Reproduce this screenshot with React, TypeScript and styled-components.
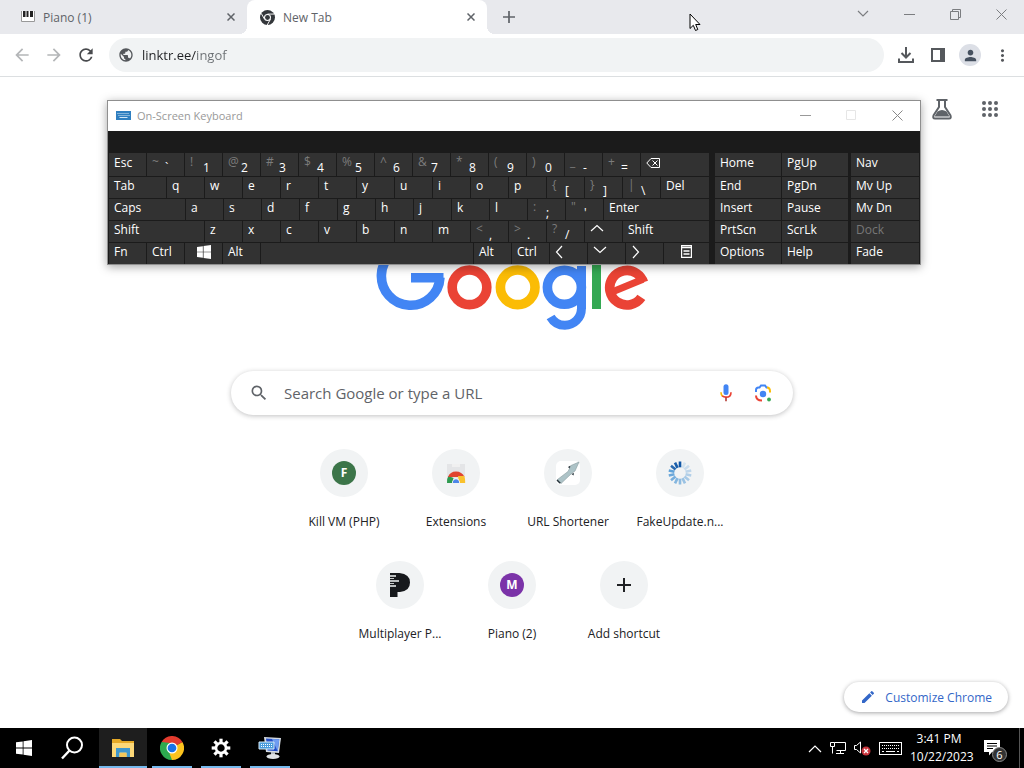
import React from "react";
import styled, { createGlobalStyle, css } from "styled-components";
import {
  MdArrowBack,
  MdArrowForward,
  MdEdit,
  MdMoreVert,
  MdPerson,
  MdPublic,
  MdRefresh,
  MdSearch,
} from "react-icons/md";

const GlobalStyle = createGlobalStyle`
  *, *::before, *::after { box-sizing: border-box; }
  body {
    margin: 0;
    background: #fff;
    font-family: "Open Sans", "Noto Sans", sans-serif;
    font-size: 12px;
    color: #202124;
  }
  button, input { font: inherit; color: inherit; }
  button { border: 0; padding: 0; background: none; }
  svg { display: block; flex: none; }
`;

const Desktop = styled.div`
  position: relative;
  min-height: 100vh;
  display: flex;
  flex-direction: column;
  overflow: hidden;
`;

/* ---------- browser frame ---------- */

const TabStrip = styled.header`
  display: flex;
  height: 34px;
  background: #e8e9ed;
  color: #5f6368;
`;

const Tab = styled.div<{ $active?: boolean }>`
  position: relative;
  display: flex;
  align-items: center;
  gap: 8px;
  flex: 0 1 ${(p) => (p.$active ? 240 : 247)}px;
  padding: 0 8px 0 ${(p) => (p.$active ? 13 : 21)}px;
  ${(p) =>
    p.$active &&
    css`
      background: #fff;
      border-radius: 8px 8px 0 0;
      &::before,
      &::after {
        content: "";
        position: absolute;
        bottom: 0;
        width: 8px;
        height: 8px;
      }
      &::before {
        right: 100%;
        background: radial-gradient(circle at 0 0, transparent 8px, #fff 8px);
      }
      &::after {
        left: 100%;
        background: radial-gradient(circle at 100% 0, transparent 8px, #fff 8px);
      }
    `}
`;

const TabTitle = styled.span`
  flex: 1;
  white-space: nowrap;
`;

const IconButton = styled.button<{ $size: number }>`
  display: flex;
  align-items: center;
  justify-content: center;
  width: ${(p) => p.$size}px;
  height: ${(p) => p.$size}px;
`;

const NewTabButton = styled(IconButton)`
  margin: 3px 0 0 8px;
`;

const Spacer = styled.div`
  flex: 1;
`;

const Captions = styled.div`
  display: flex;
`;

const CaptionButton = styled.button<{ $tone?: string }>`
  display: flex;
  align-items: center;
  justify-content: center;
  width: 46px;
  height: 28px;
  color: ${(p) => p.$tone ?? "#7b7d80"};
`;

const Toolbar = styled.nav`
  display: flex;
  align-items: center;
  height: 43px;
  padding: 0 6px;
  background: #fff;
  border-bottom: 1px solid #dcdfe1;
  color: #55585c;
`;

const NavButton = styled(IconButton)<{ $muted?: boolean }>`
  color: ${(p) => (p.$muted ? "#b4b6b8" : "#484a4d")};
`;

const Omnibox = styled.label`
  flex: 1;
  display: flex;
  align-items: center;
  gap: 8px;
  height: 34px;
  margin: 0 6px 0 7px;
  padding: 0 9px;
  border-radius: 17px;
  background: #f1f3f4;
`;

const AddressInput = styled.input`
  flex: 1;
  min-width: 0;
  border: 0;
  padding: 0;
  outline: 0;
  font-size: 13px;
  line-height: 20px;
  color: #202124;
  background: linear-gradient(to right, #202124 54px, #6b6f73 54px);
  background-clip: text;
  -webkit-text-fill-color: transparent;
`;

const Avatar = styled.span`
  display: flex;
  align-items: center;
  justify-content: center;
  width: 22px;
  height: 22px;
  border-radius: 50%;
  background: #dcdfe6;
  color: #45505f;
`;

/* ---------- new tab page ---------- */

const Page = styled.main`
  position: relative;
  flex: 1;
  display: flex;
  flex-direction: column;
  align-items: center;
  padding-bottom: 48px;
`;

const PageTools = styled.div`
  align-self: flex-end;
  display: flex;
  gap: 16px;
  padding: 16px 18px 0 0;
  color: #5f6368;
`;

const Logo = styled.div`
  margin-top: 114px;
`;

const SearchBox = styled.label`
  display: flex;
  align-items: center;
  width: calc(100% - 64px);
  max-width: 562px;
  height: 44px;
  margin-top: 40px;
  padding: 0 20px 0 18px;
  border-radius: 22px;
  background: #fff;
  box-shadow: 0 1px 5px rgba(32, 33, 36, 0.28);
  color: #5f6368;
`;

const SearchInput = styled.input`
  flex: 1;
  min-width: 0;
  margin-left: 15px;
  border: 0;
  padding: 0;
  outline: 0;
  background: none;
  font-size: 15px;
  line-height: 24px;
  &::placeholder {
    color: #5f6368;
    opacity: 1;
  }
`;

const SearchActions = styled.div`
  display: flex;
  gap: 17px;
`;

const Shortcuts = styled.div`
  display: flex;
  flex-wrap: wrap;
  justify-content: center;
  width: 100%;
  max-width: 448px;
  margin-top: 34px;
`;

const ShortcutLink = styled.a`
  display: flex;
  flex-direction: column;
  align-items: center;
  gap: 15px;
  width: 112px;
  height: 112px;
  color: #202124;
  text-decoration: none;
  line-height: 20px;
  white-space: nowrap;
`;

const ShortcutDisc = styled.span`
  display: flex;
  align-items: center;
  justify-content: center;
  width: 48px;
  height: 48px;
  border-radius: 50%;
  background: #f1f3f4;
`;

const Monogram = styled.span<{ $color: string }>`
  width: 24px;
  height: 24px;
  border-radius: 50%;
  background: ${(p) => p.$color};
  color: #fff;
  font-weight: 700;
  line-height: 24px;
  text-align: center;
`;

const CustomizeButton = styled.button`
  position: absolute;
  right: 16px;
  bottom: 16px;
  display: flex;
  align-items: center;
  gap: 9px;
  height: 30px;
  padding: 0 16px;
  border-radius: 15px;
  background: #fff;
  box-shadow: 0 1px 4px rgba(32, 33, 36, 0.4);
  color: #3367c8;
`;

/* ---------- on-screen keyboard ---------- */

const KeyboardWindow = styled.section`
  position: absolute;
  top: 100px;
  left: 107px;
  width: 814px;
  border: 1px solid #8f8f8f;
  background: #1b1b1b;
  box-shadow: 0 2px 9px rgba(0, 0, 0, 0.35);
`;

const KeyboardTitle = styled.header`
  display: flex;
  align-items: center;
  height: 30px;
  padding: 0 0 2px 8px;
  background: #fff;
  color: #999;
`;

const KeyboardName = styled.h1`
  flex: 1;
  margin: 0 0 0 6px;
  font-size: 11px;
  font-weight: 400;
`;

const KeyboardBody = styled.div`
  display: flex;
  padding: 22px 1px 0;
`;

const KeyRows = styled.div`
  flex: 1;
  display: flex;
  flex-direction: column;
  gap: 1px;
`;

const KeyRow = styled.div`
  display: flex;
  gap: 1px;
`;

const SideColumn = styled.div<{ $width: number; $gap: number }>`
  display: flex;
  flex-direction: column;
  gap: 1px;
  width: ${(p) => p.$width}px;
  margin-left: ${(p) => p.$gap}px;
`;

const KeyCap = styled.button<{ $width?: number; $centered?: boolean; $dim?: boolean; $tall?: boolean }>`
  display: flex;
  align-items: flex-start;
  justify-content: ${(p) => (p.$centered ? "center" : "flex-start")};
  flex: ${(p) => (p.$width ? `0 0 ${p.$width}px` : "1 1 auto")};
  height: ${(p) => (p.$tall ? 23 : 21)}px;
  padding: ${(p) => (p.$tall ? 1 : 0)}px 5px 0;
  background: #323232;
  color: ${(p) => (p.$dim ? "#777" : "#fff")};
  line-height: 18px;
  text-align: left;
  white-space: nowrap;
  svg {
    margin-top: 2px;
  }
`;

const SideKey = styled(KeyCap)`
  flex: none;
`;

const ShiftGlyph = styled.span`
  width: 13px;
  color: #7c7c7c;
  line-height: 16px;
`;

const BaseGlyph = styled.span`
  line-height: 27px;
`;

/* ---------- taskbar ---------- */

const Taskbar = styled.footer`
  display: flex;
  height: 40px;
  background: #000;
  color: #fff;
`;

const TaskButton = styled.button<{ $running?: boolean; $current?: boolean }>`
  display: flex;
  align-items: center;
  justify-content: center;
  width: 48px;
  margin-right: 1px;
  background: ${(p) =>
    p.$current
      ? "linear-gradient(#76b9ed, #76b9ed) bottom / 48px 2px no-repeat, #1e1e1e"
      : p.$running
      ? "linear-gradient(#76b9ed, #76b9ed) bottom / 40px 2px no-repeat"
      : "none"};
`;

const SearchTaskButton = styled(TaskButton)`
  margin-right: 2px;
`;

const Tray = styled.div`
  display: flex;
  align-items: center;
  gap: 8px;
  padding-right: 19px;
`;

const TrayButton = styled.button`
  position: relative;
  display: flex;
`;

const NoticeButton = styled(TrayButton)`
  margin-left: 8px;
`;

const Clock = styled.time`
  width: 58px;
  line-height: 18px;
  text-align: center;
  white-space: nowrap;
  font-size: 12px;
`;

const NoticeCount = styled.span`
  position: absolute;
  left: 8px;
  top: 7px;
  width: 15px;
  height: 15px;
  border: 1px solid #888;
  border-radius: 50%;
  background: #333;
  font-size: 11px;
  line-height: 13px;
  text-align: center;
`;

const PeekEdge = styled.div`
  width: 5px;
  border-left: 1px solid #555;
`;

const PointerMark = styled.svg`
  position: absolute;
  left: 689px;
  top: 13px;
`;

/* ---------- drawings ---------- */

const CrossIcon = ({ size = 8, weight = 1.5 }: { size?: number; weight?: number }) => (
  <svg width={size} height={size} viewBox={`0 0 ${size} ${size}`} stroke="currentColor" strokeWidth={weight}>
    <path d={`M.5 .5L${size - 0.5} ${size - 0.5}M${size - 0.5} .5L.5 ${size - 0.5}`} />
  </svg>
);

const DashIcon = () => (
  <svg width="11" height="11" stroke="currentColor">
    <path d="M0 5.5h11" />
  </svg>
);

const PianoIcon = () => (
  <svg width="14" height="12" viewBox="0 0 14 12">
    <path d="M.5 0v10.500h13V0" fill="#fff" stroke="#999" />
    <path d="M2 0h2.500v6H2zM5.500 0h2v6h-2zM9 0h3v6H9z" fill="#222" />
  </svg>
);

const ChromeMono = () => (
  <svg width="15" height="15" viewBox="0 0 24 24">
    <circle cx="12" cy="12" r="12" fill="#34373b" />
    <path d="M12 6.500h11M7.300 14.800L2 5.500M16.700 14.800L11.500 24" stroke="#fff" strokeWidth="1.500" />
    <circle cx="12" cy="12" r="5.600" fill="#fff" />
    <circle cx="12" cy="12" r="3.900" fill="#34373b" />
  </svg>
);

const ChromeColor = () => (
  <svg width="24" height="24" viewBox="0 0 48 48">
    <path d="M24 24L3.200 12A24 24 0 0 1 44.800 12z" fill="#e33b2e" />
    <path d="M24 24L44.800 12A24 24 0 0 1 24 48z" fill="#fcc31e" />
    <path d="M24 24L24 48A24 24 0 0 1 3.200 12z" fill="#2da94f" />
    <path d="M24 13h21.300l-.5-1L24 12z" fill="#e33b2e" />
    <path d="M33.500 29.500L24 48l-5-13z" fill="#fcc31e" />
    <path d="M3.200 12L14.500 29.500 20 14z" fill="#2da94f" />
    <circle cx="24" cy="24" r="11" fill="#fff" />
    <circle cx="24" cy="24" r="8.700" fill="#1a73e8" />
  </svg>
);

const DownloadIcon = () => (
  <svg width="18" height="18" fill="none" stroke="currentColor" strokeWidth="2">
    <path d="M9 1v10M4.500 7L9 11.500 13.500 7M2 12.500V16h14v-3.500" />
  </svg>
);

const SidePanelIcon = () => (
  <svg width="14" height="14">
    <path d="M1 1h12v12H1z" fill="none" stroke="currentColor" strokeWidth="2" />
    <path d="M9 1h4v12H9z" fill="currentColor" />
  </svg>
);

const FlaskIcon = () => (
  <svg width="22" height="22" viewBox="0 0 22 22" fill="none" stroke="currentColor" strokeWidth="2">
    <path d="M5.500 2h11M8 2v7L2.500 17.500Q1.500 20.500 4 20.500H18q2.500 0 1.500-3L14 9V2" />
    <path d="M6.500 13.500q4.500-3 9 0l3 5H3.500z" fill="currentColor" stroke="none" />
  </svg>
);

const AppsIcon = () => (
  <svg width="16" height="16" fill="currentColor">
    {[2, 8, 14].map((y) => [2, 8, 14].map((x) => <circle key={`${x}-${y}`} cx={x} cy={y} r="2" />))}
  </svg>
);

/* Wordmark built from rings and bars; each ring opens through its dash pattern. */
const GoogleLogo = () => (
  <svg width="272" height="92" viewBox="376 239 272 92" fill="none" strokeWidth="9.600" role="img" aria-label="Google">
    <circle cx="410.700" cy="276" r="29.300" stroke="#4285f4" pathLength="360" strokeDasharray="312 48" transform="rotate(3 410.700 276)" />
    <rect x="411" y="273" width="32.500" height="9.500" fill="#4285f4" />
    <circle cx="469.500" cy="287.300" r="17.300" stroke="#ea4335" />
    <circle cx="517.700" cy="287.300" r="17.300" stroke="#fbbc05" />
    <circle cx="564.400" cy="287.300" r="17" stroke="#4285f4" />
    <rect x="577" y="266" width="9" height="43" fill="#4285f4" />
    <circle cx="564.900" cy="308.700" r="16.500" stroke="#4285f4" strokeWidth="9" pathLength="360" strokeDasharray="150 210" />
    <rect x="592" y="239" width="9" height="70" fill="#34a853" />
    <circle cx="627" cy="287.700" r="17.300" stroke="#ea4335" pathLength="360" strokeDasharray="308 52" transform="rotate(34 627 287.700)" />
    <line x1="612" y1="292" x2="643" y2="279.300" stroke="#ea4335" strokeWidth="7" />
  </svg>
);

const MicIcon = () => (
  <svg width="20" height="22" viewBox="0 0 24 24" fill="none" strokeWidth="2">
    <rect x="9" y="1.500" width="6" height="13" rx="3" fill="#4285f4" />
    <path d="M6 11q0 3 1.800 4.700" stroke="#fbbc04" />
    <path d="M7.500 15.500Q9 17 12 17q6 0 6-6" stroke="#ea4335" />
    <path d="M12 17v5" stroke="#b7423a" />
  </svg>
);

const LensIcon = () => (
  <svg width="20" height="20" viewBox="0 0 20 20" fill="none" strokeWidth="2">
    <path d="M3 9V7q0-2.500 2.500-2.500h1L8 2.500h4l1.500 2h1" stroke="#4285f4" />
    <path d="M14 4.500q3 0 3 4v1" stroke="#fbbc04" />
    <path d="M3 12.500q0 5 6 5" stroke="#ea4335" />
    <circle cx="10" cy="11" r="3.200" fill="#4285f4" />
    <circle cx="16" cy="16.500" r="1.900" fill="#34a853" />
  </svg>
);

const WebStoreIcon = () => (
  <svg width="24" height="24">
    <path d="M3 3h18v16H3z" fill="#e4e5e7" />
    <path d="M8 3h8v3H8z" fill="#f0f0f0" />
    <path d="M3 22a9.500 9.500 0 0 1 1.500-7l5 2-1 5z" fill="#2f9b50" />
    <path d="M4 16Q6 10.500 12 10.500T20.500 16h-10z" fill="#e0452f" />
    <path d="M14 15h6.200q1.300 3 1 7H15z" fill="#f9c12d" />
    <path d="M8 22a4 4.500 0 0 1 8 0z" fill="#fff" />
    <path d="M8.800 22a3.200 3.800 0 0 1 6.400 0z" fill="#4d86e8" />
  </svg>
);

const RocketIcon = () => (
  <svg width="24" height="24">
    <rect width="24" height="24" rx="5" fill="#fff" />
    <path d="M23 1l-8 3.500-3 6L1.500 18.500 5 22.500 15 13l4-3z" fill="#adc3c7" stroke="#899ca0" strokeWidth=".6" />
    <path d="M1.500 18.500L5 22l-1.500.5-3-3zM12 6l2.500-1.500-1 3zM15.500 13l2.500-1-.5 2.500z" fill="#26333a" />
  </svg>
);

const SpinnerIcon = () => (
  <svg width="24" height="24" viewBox="-12 -12 24 24">
    {Array.from({ length: 14 }, (_, i) => (
      <rect
        key={i}
        x="-1.300"
        y="-11.500"
        width="2.600"
        height="5.800"
        fill={i === 0 || i > 11 ? "#0d55a5" : "#3f8fd2"}
        opacity={i === 0 ? 1 : 0.1 + i * 0.065}
        transform={`rotate(${(i * 360) / 14})`}
      />
    ))}
  </svg>
);

const MultiplayerIcon = () => (
  <svg width="24" height="24">
    <path d="M2 0h9.500q10.500 1 10.500 9.500T12 19H9.500v5H2z" fill="#17191c" />
    <path d="M2 3h6M2 8h9M2 13h6" stroke="#f1f3f4" strokeWidth="1.600" />
    <path d="M2 5.500h4M2 10.500h4" stroke="#f1f3f4" strokeWidth=".8" />
  </svg>
);

const PlusIcon = ({ size }: { size: number }) => (
  <svg width={size} height={size} viewBox="0 0 14 14" stroke="currentColor" strokeWidth="2">
    <path d="M7 0v14M0 7h14" />
  </svg>
);

const KeyboardGlyph = () => (
  <svg width="15" height="9">
    <rect width="15" height="9" fill="#2f7fc0" />
    <path d="M1.500 2.500h12M2.500 4.500h11" stroke="#d4e8f7" strokeDasharray="1 1" />
    <path d="M3.500 6.500h8" stroke="#d4e8f7" />
  </svg>
);

const WindowsIcon = ({ size }: { size: number }) => (
  <svg width={size} height={size} viewBox="0 0 16 16" fill="#fff">
    <path d="M0 2.300l6.700-.9v6.200H0zM7.500 1.200L16 0v7.600H7.500zM0 8.400h6.700v6.200L0 13.700zM7.500 8.400H16V16l-8.500-1.200z" />
  </svg>
);

const Chevron = ({ d, width = 14, height = 14 }: { d: string; width?: number; height?: number }) => (
  <svg width={width} height={height} fill="none" stroke="currentColor" strokeWidth="1.200">
    <path d={d} />
  </svg>
);

const BackspaceIcon = () => (
  <svg width="15" height="14" fill="none" stroke="#fff">
    <path d="M5 2.500h8.500v9H5L.8 7zM6.500 4.500l5 5M11.500 4.500l-5 5" />
  </svg>
);

const MenuKeyIcon = () => (
  <svg width="11" height="13" fill="none" stroke="#fff">
    <path d="M.5 .5h10v12H.5zM0 2.500h11M2.500 6h6M2.500 9h6" strokeWidth="1.400" />
  </svg>
);

const MagnifierIcon = () => (
  <svg width="24" height="24" fill="none" stroke="#fff" strokeWidth="2">
    <circle cx="13.500" cy="9" r="7.500" />
    <path d="M8.500 14.500L1 22.500" strokeWidth="2.400" />
  </svg>
);

const FolderIcon = () => (
  <svg width="22" height="20">
    <path d="M0 1h8l2 2h12v16H0z" fill="#e5a927" />
    <path d="M0 5h22v14H0z" fill="#fcd878" />
    <path d="M4 10h14v9h-3.500v-4.500h-7V19H4z" fill="#3f97cd" />
    <path d="M7.500 15h7v4h-7z" fill="#f4c85b" />
  </svg>
);

const GearIcon = () => (
  <svg width="20" height="20" viewBox="-10 -10 20 20">
    {Array.from({ length: 8 }, (_, i) => (
      <rect key={i} x="-1.600" y="-9.300" width="3.200" height="4.300" fill="#fff" transform={`rotate(${i * 45})`} />
    ))}
    <circle r="5" fill="#000" stroke="#fff" strokeWidth="2.600" />
  </svg>
);

const MonitorIcon = () => (
  <svg width="24" height="24">
    <path d="M6 1l17 1-2 15-13-1z" fill="#d5dbe2" />
    <path d="M8 2.500l13.300.8-1.600 12-10.200-.8z" fill="#2450c8" />
    <path d="M14 3l7.300.3-1.600 12z" fill="#6f9cf0" />
    <path d="M1 6h15v7H1z" fill="#4a9bdc" stroke="#d7ebf8" />
    <path d="M3 8.500h11M3 10.500h11" stroke="#fff" strokeDasharray="1 1" />
    <path d="M13 16h4v3h-4z" fill="#b9bfc5" />
    <ellipse cx="15" cy="20.500" rx="6.500" ry="2.500" fill="#dfe2e4" />
  </svg>
);

const NetworkIcon = () => (
  <svg width="16" height="14" fill="none" stroke="#fff">
    <path d="M4.500 1.500h11v8h-9M10.500 9.500v3M6 12.500h8M.5 1.500h4v4h-4zM2.500 5.500v7" />
  </svg>
);

const MutedIcon = () => (
  <svg width="17" height="16" fill="none" stroke="#fff">
    <path d="M.5 5.500h2L6.500 2v11L2.500 9.500h-2z" />
    <circle cx="12" cy="11" r="4.500" fill="#c9343c" stroke="none" />
    <path d="M10 9l4 4M14 9l-4 4" strokeWidth="1.300" />
  </svg>
);

const TouchKeyboardIcon = () => (
  <svg width="23" height="13" fill="none" stroke="#fff">
    <rect x=".5" y=".5" width="22" height="12" />
    <path d="M3 3.500h17M3 6.500h17" strokeDasharray="1 1" />
    <path d="M3 9.500h2M7 9.500h9M18 9.500h2" />
  </svg>
);

const NoticeIcon = () => (
  <svg width="16" height="16">
    <path d="M0 0h16v12H8l-3 3.500V12H0z" fill="#fff" />
    <path d="M3 3.500h10M3 6h10M3 8.500h6" stroke="#000" />
  </svg>
);

/* ---------- data ---------- */

type KeyDef = {
  label?: string;
  shift?: string;
  width?: number;
  icon?: React.ReactNode;
  name?: string;
  centered?: boolean;
};

const UNIT = 37;
const letters = (text: string): KeyDef[] => text.split("").map((label) => ({ label, width: UNIT }));
const pairs = (list: string[]): KeyDef[] =>
  list.map((p) => ({ shift: p[0], label: p[1], width: UNIT }));

const keyRows: KeyDef[][] = [
  [
    { label: "Esc", width: UNIT },
    ...pairs(["~`", "!1", "@2", "#3", "$4", "%5", "^6", "&7", "*8", "(9", ")0", "_-", "+="]),
    { name: "Backspace", icon: <BackspaceIcon /> },
  ],
  [{ label: "Tab", width: 57 }, ...letters("qwertyuiop"), ...pairs(["{[", "}]", "|\\"]), { label: "Del" }],
  [{ label: "Caps", width: 76 }, ...letters("asdfghjkl"), ...pairs([":;", "\"'"]), { label: "Enter" }],
  [
    { label: "Shift", width: 95 },
    ...letters("zxcvbnm"),
    ...pairs(["<,", ">.", "?/"]),
    { name: "Up", width: UNIT, icon: <Chevron d="M1 8l6-5.500L13 8" /> },
    { label: "Shift" },
  ],
  [
    { label: "Fn", width: UNIT },
    { label: "Ctrl", width: UNIT },
    { name: "Windows", width: UNIT, centered: true, icon: <WindowsIcon size={14} /> },
    { label: "Alt", width: UNIT },
    { name: "Space" },
    { label: "Alt", width: UNIT },
    { label: "Ctrl", width: UNIT },
    { name: "Left", width: UNIT, icon: <Chevron d="M7 1L1.500 7 7 13" /> },
    { name: "Down", width: UNIT, icon: <Chevron d="M1 2l6 5.500L13 2" /> },
    { name: "Right", width: UNIT, icon: <Chevron d="M2 1l5.500 6L2 13" /> },
    { name: "Menu", width: 45, centered: true, icon: <MenuKeyIcon /> },
  ],
];

const sideColumns = [
  { width: 66, gap: 6, keys: ["Home", "End", "Insert", "PrtScn", "Options"] },
  { width: 66, gap: 1, keys: ["PgUp", "PgDn", "Pause", "ScrLk", "Help"] },
  { width: 68, gap: 3, keys: ["Nav", "Mv Up", "Mv Dn", "Dock", "Fade"] },
];

const shortcuts = [
  { label: "Kill VM (PHP)", icon: <Monogram $color="#3c7549">F</Monogram> },
  { label: "Extensions", icon: <WebStoreIcon /> },
  { label: "URL Shortener", icon: <RocketIcon /> },
  { label: "FakeUpdate.n...", icon: <SpinnerIcon /> },
  { label: "Multiplayer P...", icon: <MultiplayerIcon /> },
  { label: "Piano (2)", icon: <Monogram $color="#7b33a8">M</Monogram> },
  { label: "Add shortcut", icon: <PlusIcon size={14} /> },
];

const OnScreenKeyboard = () => (
  <KeyboardWindow aria-label="On-Screen Keyboard">
    <KeyboardTitle>
      <KeyboardGlyph />
      <KeyboardName>On-Screen Keyboard</KeyboardName>
      <Captions>
        <CaptionButton aria-label="Minimize keyboard" $tone="#999"><DashIcon /></CaptionButton>
        <CaptionButton aria-label="Maximize keyboard" $tone="#e6e6e6" disabled>
          <svg width="10" height="10" fill="none" stroke="currentColor"><path d="M.5 .5h9v9h-9z" /></svg>
        </CaptionButton>
        <CaptionButton aria-label="Close keyboard" $tone="#888"><CrossIcon size={11} weight={1} /></CaptionButton>
      </Captions>
    </KeyboardTitle>
    <KeyboardBody>
      <KeyRows>
        {keyRows.map((row, r) => (
          <KeyRow key={r}>
            {row.map((k, i) => (
              <KeyCap key={i} $width={k.width} $centered={k.centered} $tall={r === 0} aria-label={k.name}>
                {k.icon}
                {k.shift && <ShiftGlyph>{k.shift}</ShiftGlyph>}
                {k.shift ? <BaseGlyph>{k.label}</BaseGlyph> : k.label}
              </KeyCap>
            ))}
          </KeyRow>
        ))}
      </KeyRows>
      {sideColumns.map((col) => (
        <SideColumn key={col.keys[0]} $width={col.width} $gap={col.gap}>
          {col.keys.map((k, i) => (
            <SideKey key={k} $dim={k === "Dock"} $tall={i === 0}>{k}</SideKey>
          ))}
        </SideColumn>
      ))}
    </KeyboardBody>
  </KeyboardWindow>
);

export default function App() {
  return (
    <Desktop>
      <GlobalStyle />
      <TabStrip>
        <Tab>
          <PianoIcon />
          <TabTitle>Piano (1)</TabTitle>
          <IconButton $size={16} aria-label="Close Piano (1)"><CrossIcon /></IconButton>
        </Tab>
        <Tab $active>
          <ChromeMono />
          <TabTitle>New Tab</TabTitle>
          <IconButton $size={16} aria-label="Close New Tab"><CrossIcon /></IconButton>
        </Tab>
        <NewTabButton $size={28} aria-label="New tab"><PlusIcon size={12} /></NewTabButton>
        <Spacer />
        <Captions>
          <CaptionButton aria-label="Search tabs"><Chevron d="M1 1l5 5 5-5" width={12} height={8} /></CaptionButton>
          <CaptionButton aria-label="Minimize"><DashIcon /></CaptionButton>
          <CaptionButton aria-label="Restore">
            <svg width="11" height="11" fill="none" stroke="currentColor">
              <path d="M.5 2.500h8v8h-8zM2.500 2.500v-2h8v8h-2" />
            </svg>
          </CaptionButton>
          <CaptionButton aria-label="Close"><CrossIcon size={11} weight={1} /></CaptionButton>
        </Captions>
      </TabStrip>

      <Toolbar>
        <NavButton $size={32} $muted aria-label="Back"><MdArrowBack size={20} /></NavButton>
        <NavButton $size={32} $muted aria-label="Forward"><MdArrowForward size={20} /></NavButton>
        <NavButton $size={32} aria-label="Reload"><MdRefresh size={20} /></NavButton>
        <Omnibox>
          <MdPublic size={16} />
          <AddressInput aria-label="Address" defaultValue="linktr.ee/ingof" />
        </Omnibox>
        <IconButton $size={32} aria-label="Downloads"><DownloadIcon /></IconButton>
        <IconButton $size={32} aria-label="Side panel"><SidePanelIcon /></IconButton>
        <IconButton $size={32} aria-label="Profile"><Avatar><MdPerson size={17} /></Avatar></IconButton>
        <IconButton $size={32} aria-label="Menu"><MdMoreVert size={19} /></IconButton>
      </Toolbar>

      <Page>
        <PageTools>
          <IconButton $size={32} aria-label="Search Labs"><FlaskIcon /></IconButton>
          <IconButton $size={32} aria-label="Google apps"><AppsIcon /></IconButton>
        </PageTools>
        <Logo><GoogleLogo /></Logo>
        <SearchBox>
          <MdSearch size={20} />
          <SearchInput aria-label="Search" placeholder="Search Google or type a URL" />
          <SearchActions>
            <IconButton $size={20} aria-label="Voice search"><MicIcon /></IconButton>
            <IconButton $size={20} aria-label="Image search"><LensIcon /></IconButton>
          </SearchActions>
        </SearchBox>
        <Shortcuts>
          {shortcuts.map((s) => (
            <ShortcutLink key={s.label} href="#">
              <ShortcutDisc>{s.icon}</ShortcutDisc>
              {s.label}
            </ShortcutLink>
          ))}
        </Shortcuts>
        <CustomizeButton><MdEdit size={16} />Customize Chrome</CustomizeButton>
      </Page>

      <Taskbar>
        <TaskButton aria-label="Start"><WindowsIcon size={16} /></TaskButton>
        <SearchTaskButton aria-label="Search Windows"><MagnifierIcon /></SearchTaskButton>
        <TaskButton aria-label="File Explorer" $current><FolderIcon /></TaskButton>
        <TaskButton aria-label="Chrome" $running><ChromeColor /></TaskButton>
        <TaskButton aria-label="Settings" $running><GearIcon /></TaskButton>
        <TaskButton aria-label="On-Screen Keyboard" $running><MonitorIcon /></TaskButton>
        <Spacer />
        <Tray>
          <TrayButton aria-label="Hidden icons"><Chevron d="M1 8l6-6 6 6" height={9} /></TrayButton>
          <TrayButton aria-label="Network"><NetworkIcon /></TrayButton>
          <TrayButton aria-label="Volume"><MutedIcon /></TrayButton>
          <TrayButton aria-label="Touch keyboard"><TouchKeyboardIcon /></TrayButton>
          <Clock>3:41 PM<br />10/22/2023</Clock>
          <NoticeButton aria-label="Notifications"><NoticeIcon /><NoticeCount>6</NoticeCount></NoticeButton>
        </Tray>
        <PeekEdge />
      </Taskbar>

      <OnScreenKeyboard />

      <PointerMark width="12" height="19" viewBox="0 0 12 19" aria-hidden="true">
        <path d="M1 1v14.500l3.300-3.200L6.500 17.500l2.300-1L6.700 11.500H11z" fill="#fff" stroke="#000" />
      </PointerMark>
    </Desktop>
  );
}
